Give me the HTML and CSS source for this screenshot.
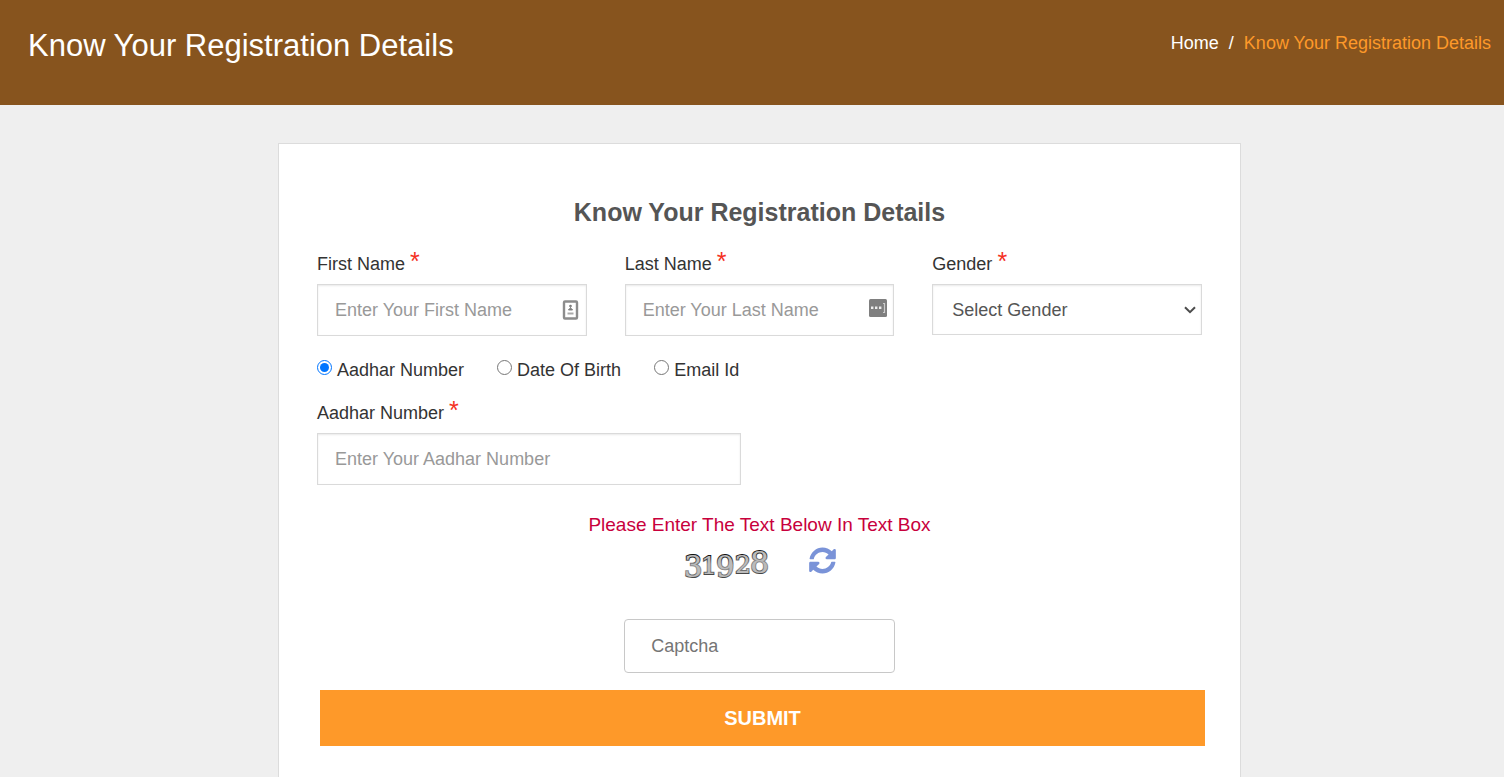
FILE: index.html
```html
<!DOCTYPE html>
<html lang="en">
<head>
<meta charset="utf-8">
<meta name="viewport" content="width=device-width, initial-scale=1">
<title>Know Your Registration Details</title>
<link rel="stylesheet" href="styles.css">
</head>
<body>
<header class="banner">
  <h1 class="banner-title">Know Your Registration Details</h1>
  <nav class="breadcrumb" aria-label="Breadcrumb">
    <a href="#">Home</a>
    <span>/</span>
    <span class="current" aria-current="page">Know Your Registration Details</span>
  </nav>
</header>
<main class="page">
  <form class="card">
    <h2 class="card-title">Know Your Registration Details</h2>

    <div class="row thirds">
      <div class="field">
        <label for="first">First Name <span class="req">*</span></label>
        <div class="control">
          <input class="box" id="first" type="text" placeholder="Enter Your First Name">
          <svg class="hint" width="18" height="20" viewBox="0 0 18 20" aria-hidden="true">
            <rect x="2" y="1.500" width="13" height="17" rx="1" fill="#fff" stroke="#8c8c8c" stroke-width="2.400"/>
            <circle cx="8.500" cy="6" r="1.300" fill="#777"/>
            <path d="M8.500 6v3M6.500 10c0-1 1-1.500 2-1.500s2 .500 2 1.500z" fill="#777" stroke="#888"/>
            <path d="M5.500 13.500h6" stroke="#aaa" stroke-width="2"/>
          </svg>
        </div>
      </div>
      <div class="field">
        <label for="last">Last Name <span class="req">*</span></label>
        <div class="control">
          <input class="box" id="last" type="text" placeholder="Enter Your Last Name">
          <svg class="hint hint-dots" width="18" height="18" viewBox="0 0 18 18" aria-hidden="true">
            <rect width="18" height="18" rx="1.500" fill="#7f7f7f"/>
            <path d="M2 7.500h2.400v2.600H2zM6 7.500h2.400v2.600H6zM10 7.500h2.400v2.600H10z" fill="#eee"/>
            <path d="M14 4.500h1.500v9H14" fill="none" stroke="#ccc" stroke-width="1.200"/>
          </svg>
        </div>
      </div>
      <div class="field">
        <label for="gender">Gender <span class="req">*</span></label>
        <div class="control">
          <select class="box select" id="gender"><option>Select Gender</option><option>Male</option><option>Female</option></select>
          <svg class="arrow" width="12" height="8" viewBox="0 0 12 8" aria-hidden="true"><path d="M1 1.200l5 5 5-5" fill="none" stroke="#4c4c4c" stroke-width="2"/></svg>
        </div>
      </div>
    </div>

    <div class="choices" role="radiogroup" aria-label="Search by">
      <label><input type="radio" name="by" checked>Aadhar Number</label>
      <label><input type="radio" name="by">Date Of Birth</label>
      <label><input type="radio" name="by">Email Id</label>
    </div>

    <div class="row halves">
      <div class="field">
        <label for="aadhar">Aadhar Number <span class="req">*</span></label>
        <input class="box" id="aadhar" type="text" placeholder="Enter Your Aadhar Number">
      </div>
    </div>

    <p class="message">Please Enter The Text Below In Text Box</p>
    <div class="captcha">
      <svg width="90" height="40" viewBox="0 0 90 40" role="img" aria-label="31928">
        <defs>
          <linearGradient id="ink" x1="0" y1="0" x2="0" y2="1">
            <stop offset=".15" stop-color="#111"/><stop offset=".45" stop-color="#888"/><stop offset=".65" stop-color="#888"/><stop offset=".9" stop-color="#222"/>
          </linearGradient>
        </defs>
        <g class="digits">
          <text x="0" y="33" font-size="29">3</text>
          <text x="17" y="30" font-size="25">1</text>
          <text x="32" y="33" font-size="29">9</text>
          <text x="51" y="29" font-size="25">2</text>
          <text x="66" y="29" font-size="30">8</text>
        </g>
      </svg>
      <button class="refresh" type="button" aria-label="Refresh">
        <svg width="27" height="27" viewBox="0 0 512 512" aria-hidden="true"><path fill="currentColor" d="M371 142C340 112 299 95 256 95c-78 0-145 53-164 127-1 6-6 10-12 10H23c-8 0-13-7-12-14C33 97 138 8 256 8c68 0 130 27 176 71l36-36c15-15 41-4 41 17v148c0 13-11 24-24 24H337c-21 0-32-26-17-41zM27 280h148c21 0 32 26 17 41l-51 49c31 30 72 47 115 47 78 0 145-53 164-127 1-6 6-10 12-10h57c8 0 13 7 12 14-22 121-127 210-245 210-68 0-130-27-176-71l-36 36c-15 15-41 4-41-17V304c0-13 11-24 24-24z"/></svg>
      </button>
    </div>
    <input class="captcha-box" type="text" placeholder="Captcha" aria-label="Captcha">
    <button class="submit" type="submit">SUBMIT</button>
  </form>
</main>
</body>
</html>
```
FILE: styles.css
```css
* { box-sizing: border-box; }

body {
  margin: 0;
  min-height: 100vh;
  display: flex;
  flex-direction: column;
  background: #efefef;
  color: #333;
  font: 18px/28px "Liberation Sans", Arial, sans-serif;
}

.banner {
  display: flex;
  justify-content: space-between;
  align-items: flex-start;
  padding: 26px 13px 39px 28px;
  background: #87541e;
  color: #fff;
}
.banner-title { margin: 0; font-size: 31px; line-height: 40px; font-weight: 400; }
.breadcrumb { display: flex; gap: 10px; padding-top: 3px; }
.breadcrumb a { color: inherit; text-decoration: none; }
.breadcrumb .current { color: #fe9929; }

.page {
  flex: 1;
  display: flex;
  justify-content: center;
  padding: 38px 0 0 15px;
}
.card {
  width: 100%;
  max-width: 963px;
  padding: 54px 38px 30px;
  background: #fff;
  border: 1px solid #dcdcdc;
  border-bottom: 0;
}
.card-title {
  margin: 0 0 24px;
  font-size: 25px;
  line-height: 28px;
  text-align: center;
  color: #555;
}

.row { display: grid; gap: 38px; }
.thirds { grid-template-columns: repeat(3, minmax(0, 1fr)); }
.halves { grid-template-columns: repeat(2, minmax(0, 1fr)); }
.field { display: flex; flex-direction: column; gap: 6px; }
.req { color: #f4311f; font-size: 25px; line-height: 0; }
.control { position: relative; }

.box {
  width: 100%;
  height: 52px;
  padding: 0 17px;
  border: 1px solid #dadada;
  border-radius: 0;
  background: #fff;
  box-shadow: inset 0 1px 2px rgba(0, 0, 0, .09);
  color: #555;
  font: inherit;
}
.box::placeholder { color: #999; }
.select { appearance: none; height: 51px; padding: 0 30px 0 19px; }
.arrow { position: absolute; right: 6px; top: 22px; pointer-events: none; }
.hint { position: absolute; right: 7px; top: 16px; }
.hint-dots { top: 15px; }

.choices { display: flex; gap: 33px; margin: 22px 0 17px; line-height: 24px; }
.choices label { display: flex; gap: 5px; align-items: flex-start; }
.choices input { width: 15px; height: 15px; margin: 2px 0 0; }

.message {
  margin: 28px 0 7px;
  font-size: 19px;
  line-height: 24px;
  text-align: center;
  color: #c8003c;
}
.captcha { display: flex; justify-content: center; gap: 35px; height: 40px; }
.digits {
  font-family: "DejaVu Serif", Georgia, serif;
  fill: #bbb;
  stroke: url(#ink);
  stroke-width: 2px;
  paint-order: stroke;
}
.refresh { align-self: flex-start; display: flex; padding: 3px 0 0; border: 0; background: none; color: #7a93d8; }

.captcha-box {
  display: block;
  width: calc((100% - 74px) / 3);
  height: 54px;
  margin: 35px auto 17px;
  padding: 0 26px;
  border: 1px solid #c8c8c8;
  border-radius: 4px;
  font: inherit;
}
.captcha-box::placeholder { color: #757575; }
.submit {
  display: block;
  width: 100%;
  height: 56px;
  margin-left: 3px;
  padding: 0;
  border: 0;
  background: #fe9929;
  color: #fff;
  font: 700 20px/28px "Liberation Sans", Arial, sans-serif;
}
```
